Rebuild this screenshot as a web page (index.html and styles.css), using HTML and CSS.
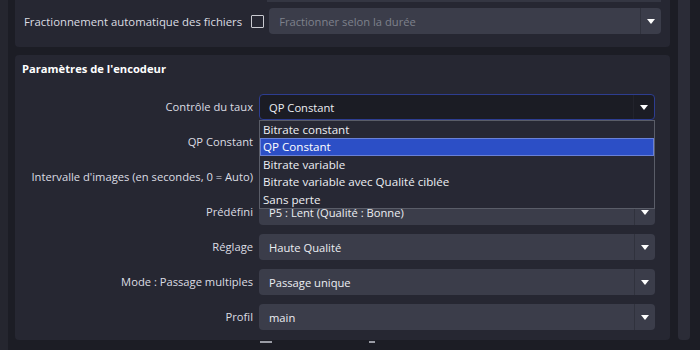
FILE: index.html
```html
<!DOCTYPE html>
<html>
<head>
    <meta charset="UTF-8">
    <title>Paramètres de sortie</title>
    <link rel="stylesheet" href="styles.css">
</head>
<body>
    <div class="side-strip"></div>

    <div class="content">
        <div class="panel panel-top">
            <div class="prev-edge"></div>
            <div class="split-row">
                <span class="split-label">Fractionnement automatique des fichiers</span>
                <span class="checkbox"></span>
                <div class="combo disabled">
                    <span class="combo-text">Fractionner selon la durée</span>
                    <span class="combo-btn"><span class="arrow"></span></span>
                </div>
            </div>
        </div>

        <div class="panel panel-encoder">
            <h2 class="panel-title">Paramètres de l'encodeur</h2>
            <div class="form">
                <label class="form-label">Contrôle du taux</label>
                <div class="combo focused">
                    <span class="combo-text">QP Constant</span>
                    <span class="combo-btn"><span class="arrow"></span></span>
                    <ul class="dropdown">
                        <li>Bitrate constant</li>
                        <li class="selected">QP Constant</li>
                        <li>Bitrate variable</li>
                        <li>Bitrate variable avec Qualité ciblée</li>
                        <li>Sans perte</li>
                    </ul>
                </div>

                <label class="form-label">QP Constant</label>
                <div class="combo"></div>

                <label class="form-label">Intervalle d'images (en secondes, 0 = Auto)</label>
                <div class="combo"></div>

                <label class="form-label">Prédéfini</label>
                <div class="combo">
                    <span class="combo-text">P5 : Lent (Qualité : Bonne)</span>
                    <span class="combo-btn"><span class="arrow"></span></span>
                </div>

                <label class="form-label">Réglage</label>
                <div class="combo">
                    <span class="combo-text">Haute Qualité</span>
                    <span class="combo-btn"><span class="arrow"></span></span>
                </div>

                <label class="form-label">Mode : Passage multiples</label>
                <div class="combo">
                    <span class="combo-text">Passage unique</span>
                    <span class="combo-btn"><span class="arrow"></span></span>
                </div>

                <label class="form-label">Profil</label>
                <div class="combo">
                    <span class="combo-text">main</span>
                    <span class="combo-btn"><span class="arrow"></span></span>
                </div>
            </div>
        </div>

        <div class="next-row">
            <span class="check-top"></span>
            <span class="check-top small"></span>
        </div>
    </div>

    <div class="scroll-track"></div>
</body>
</html>
```

FILE: styles.css
```css
body {
    margin: 0;
    height: 350px;
    overflow: hidden;
    background-color: #1c1d25;
    font-family: "Open Sans", "Noto Sans", sans-serif;
    font-size: 11.2px;
    color: #dcdde3;
    display: flex;
}

.side-strip {
    width: 8px;
    background-color: #25262f;
}

.content {
    width: 655px;
    margin-left: 7px;
    display: flex;
    flex-direction: column;
}

.panel {
    background-color: #262732;
    border-radius: 4px;
}

.panel-top {
    height: 47px;
    border-top-left-radius: 0;
    border-top-right-radius: 0;
}

.prev-edge {
    height: 2px;
    margin-left: 252px;
    margin-right: 9px;
    background-color: #343642;
}

.split-row {
    display: flex;
    align-items: center;
    margin-top: 6px;
    height: 26px;
}

.split-label {
    margin-left: 9px;
    font-size: 11.35px;
}

.checkbox {
    width: 11px;
    height: 11px;
    border: 1px solid #c9cad0;
    border-radius: 1px;
    margin-left: 9px;
}

.split-row .combo {
    flex: 1;
    margin-left: 5px;
    margin-right: 9px;
}

.panel-encoder {
    margin-top: 8px;
    height: 285px;
}

.panel-title {
    margin: 0;
    padding: 5px 0 0 7px;
    height: 20px;
    line-height: 18px;
    font-size: 11.2px;
    font-weight: bold;
    color: #ffffff;
}

.form {
    margin-top: 14px;
    display: grid;
    grid-template-columns: 238px 396px;
    column-gap: 6px;
    row-gap: 9px;
}

.form-label {
    text-align: right;
    line-height: 26px;
    color: #dcdde3;
}

.combo {
    position: relative;
    height: 26px;
    box-sizing: border-box;
    background-color: #3b3d4a;
    border-radius: 4px;
    display: flex;
    align-items: center;
    color: #eceef2;
}

.combo-text {
    flex: 1;
    padding-left: 10px;
}

.combo.disabled .combo-text {
    color: #7e818c;
}

.combo-btn {
    width: 20px;
    height: 100%;
    border-left: 1px solid #30323d;
    display: flex;
    align-items: center;
    justify-content: center;
}

.arrow {
    width: 0;
    height: 0;
    border-left: 4px solid transparent;
    border-right: 4px solid transparent;
    border-top: 5px solid #ffffff;
}

.combo.focused {
    background-color: #1b1c24;
    border: 1px solid #2d3d90;
}

.combo.focused .combo-text {
    padding-left: 9px;
}

.combo.focused .combo-btn {
    border-left-color: #22232c;
}

.dropdown {
    position: absolute;
    top: 25px;
    left: -1px;
    right: -1px;
    margin: 0;
    padding: 0;
    list-style: none;
    background-color: #272834;
    border: 1px solid #5a5d68;
    z-index: 10;
}

.dropdown li {
    height: 17.4px;
    line-height: 17px;
    padding-left: 3px;
    box-sizing: border-box;
    color: #eceef2;
    font-size: 11.6px;
}

.dropdown li.selected {
    background-color: #2c4fc6;
    border: 1px solid #6a81d6;
    padding-left: 2px;
    line-height: 15px;
    color: #ffffff;
}

.next-row {
    display: flex;
    padding-top: 1px;
}

.check-top {
    width: 12px;
    height: 2px;
    margin-left: 245px;
    background-color: #9a9ca5;
}

.check-top.small {
    width: 6px;
    margin-left: 97px;
}

.scroll-track {
    width: 12px;
    height: 340px;
    margin-left: 8px;
    background-color: #2b2c37;
    border-radius: 0 0 4px 4px;
}
```
